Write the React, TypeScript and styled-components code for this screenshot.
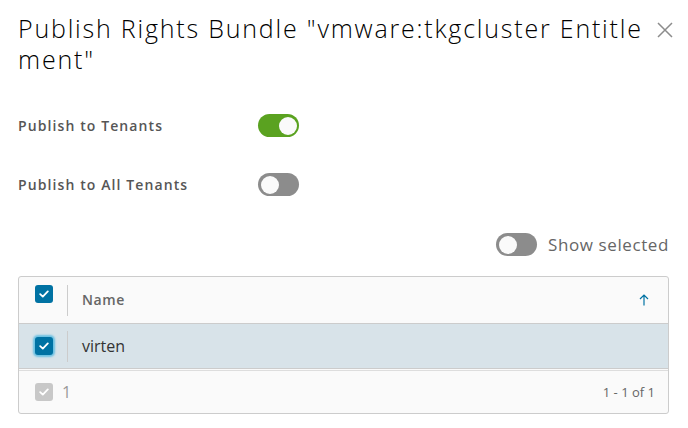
import styled, { createGlobalStyle } from 'styled-components';

const GlobalStyle = createGlobalStyle`
  body {
    margin: 0;
    background: #ffffff;
    font-family: "Open Sans", Lato, sans-serif;
  }
`;

const Check = ({ color = '#fff' }: { color?: string }) => (
  <svg width="10" height="8" viewBox="0 0 10 8">
    <path d="M1.2 4.2 L3.8 6.6 L8.8 1.4" fill="none" stroke={color} strokeWidth="1.8" strokeLinecap="round" strokeLinejoin="round" />
  </svg>
);

const App = () => {
  return (
    <>
      <GlobalStyle />
      <Modal>
        <Header>
          <Title>
            Publish Rights Bundle "vmware:tkgcluster Entitle
            <br />
            ment"
          </Title>
          <CloseBtn aria-label="close">
            <svg width="16" height="16" viewBox="0 0 16 16">
              <path d="M1 1 L15 15 M15 1 L1 15" stroke="#8c8c8c" strokeWidth="1.5" />
            </svg>
          </CloseBtn>
        </Header>

        <Form>
          <Label>Publish to Tenants</Label>
          <Toggle on />
          <Label>Publish to All Tenants</Label>
          <Toggle />
        </Form>

        <ShowSelected>
          <Toggle />
          <span>Show selected</span>
        </ShowSelected>

        <Grid>
          <HeadRow>
            <CheckCell>
              <Box><Check /></Box>
            </CheckCell>
            <Sep />
            <HeadName>Name</HeadName>
            <SortIcon>
              <svg width="10" height="12" viewBox="0 0 10 12">
                <path d="M5 11.5 V1 M1 5 L5 1 L9 5" fill="none" stroke="#0072a3" strokeWidth="1.2" />
              </svg>
            </SortIcon>
          </HeadRow>
          <BodyRow>
            <CheckCell>
              <Box focused><Check /></Box>
            </CheckCell>
            <Sep />
            <Cell>virten</Cell>
          </BodyRow>
          <Footer>
            <FooterLeft>
              <Box disabled><Check /></Box>
              <span>1</span>
            </FooterLeft>
            <span>1 - 1 of 1</span>
          </Footer>
        </Grid>
      </Modal>
    </>
  );
};

const Modal = styled.div`
  width: 688px;
  height: 428px;
  box-sizing: border-box;
  padding: 13px 19px 0 18px;
  background: #fff;
`;

const Header = styled.div`
  display: flex;
  justify-content: space-between;
  align-items: flex-start;
`;

const Title = styled.h3`
  margin: 0;
  font-size: 25px;
  font-weight: 300;
  line-height: 31px;
  color: #000;
  letter-spacing: 1.8px;
  white-space: nowrap;
`;

const CloseBtn = styled.button`
  border: none;
  background: none;
  padding: 0;
  margin: 9px -4px 0 0;
  width: 16px;
  height: 16px;
  display: flex;
  cursor: pointer;
`;

const Form = styled.div`
  display: grid;
  grid-template-columns: 240px auto;
  align-items: center;
  row-gap: 36px;
  margin-top: 39px;
`;

const Label = styled.div`
  font-size: 14px;
  font-weight: 600;
  color: #565656;
  letter-spacing: 1.1px;
`;

const Toggle = styled.span<{ on?: boolean }>`
  position: relative;
  display: inline-block;
  width: 41px;
  height: 23px;
  border-radius: 12px;
  background: ${({ on }) => (on ? '#5aa220' : '#8c8c8c')};
  &::after {
    content: '';
    position: absolute;
    top: 2.5px;
    left: ${({ on }) => (on ? '20.5px' : '2.5px')};
    width: 18px;
    height: 18px;
    border-radius: 50%;
    background: #fafafa;
  }
`;

const ShowSelected = styled.div`
  display: flex;
  justify-content: flex-end;
  align-items: center;
  gap: 11px;
  margin-top: 37px;
  font-size: 17px;
  color: #666;
  letter-spacing: 0.6px;
`;

const Grid = styled.div`
  margin-top: 20px;
  border: 1px solid #ccc;
  border-radius: 3px;
  background: #fafafa;
  overflow: hidden;
`;

const HeadRow = styled.div`
  display: flex;
  align-items: flex-start;
  height: 46px;
  border-bottom: 1px solid #ccc;
`;

const BodyRow = styled.div`
  display: flex;
  align-items: center;
  height: 44px;
  background: #d8e3e9;
  border-bottom: 1px solid #ccc;
`;

const CheckCell = styled.div`
  width: 48px;
  padding-left: 16px;
  box-sizing: border-box;
  display: flex;
  ${HeadRow} & {
    padding-top: 8px;
  }
`;

const Sep = styled.div`
  width: 1px;
  height: 31px;
  background: #ccc;
  ${HeadRow} & {
    margin-top: 8px;
  }
`;

const Box = styled.span<{ focused?: boolean; disabled?: boolean }>`
  width: 18px;
  height: 18px;
  border-radius: 3px;
  display: flex;
  align-items: center;
  justify-content: center;
  background: ${({ disabled }) => (disabled ? '#c8c8c8' : '#0072a3')};
  box-shadow: ${({ focused }) => (focused ? '0 0 2px 2px #6bc1e3' : 'none')};
`;

const HeadName = styled.div`
  flex: 1;
  padding: 13px 0 0 14px;
  font-size: 14px;
  font-weight: 600;
  color: #666;
  letter-spacing: 0.6px;
`;

const SortIcon = styled.div`
  padding: 17px 19px 0 0;
  display: flex;
`;

const Cell = styled.div`
  flex: 1;
  padding-left: 14px;
  font-size: 16px;
  color: #333;
`;

const Footer = styled.div`
  display: flex;
  align-items: center;
  justify-content: space-between;
  height: 42px;
  margin-top: 1px;
  border-top: 1px solid #ddd;
  padding: 0 13px 0 16px;
  font-size: 13px;
  color: #666;
`;

const FooterLeft = styled.div`
  display: flex;
  align-items: center;
  gap: 9px;
  font-size: 16px;
  color: #999;
`;

export default App;
